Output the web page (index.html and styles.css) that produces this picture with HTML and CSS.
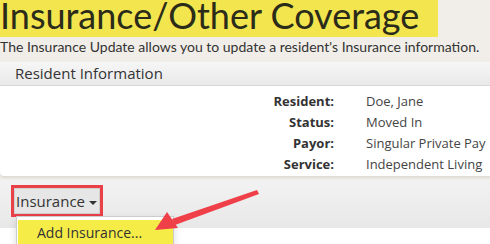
FILE: index.html
```html
<!DOCTYPE html>
<html lang="en">

<head>
    <meta charset="UTF-8">
    <meta name="viewport" content="width=device-width, initial-scale=1.0">
    <link rel="stylesheet" href="styles.css">
    <title>Insurance/Other Coverage</title>
</head>

<body>
    <header class="page-header">
        <h1 class="page-title">Insurance/Other Coverage</h1>
        <p class="page-intro">The Insurance Update allows you to update a resident's Insurance information.</p>
    </header>

    <section class="panel">
        <div class="panel-heading">Resident Information</div>
        <div class="panel-body">
            <dl class="info-list">
                <dt>Resident:</dt>
                <dd>Doe, Jane</dd>
                <dt>Status:</dt>
                <dd>Moved In</dd>
                <dt>Payor:</dt>
                <dd>Singular Private Pay</dd>
                <dt>Service:</dt>
                <dd>Independent Living</dd>
            </dl>
        </div>
    </section>

    <section class="toolbar">
        <div class="dropdown">
            <button class="dropdown-toggle">Insurance <span class="caret"></span></button>
            <ul class="dropdown-menu">
                <li class="active">Add Insurance...</li>
            </ul>
        </div>
    </section>
    <div class="content"></div>

    <!-- callout arrow -->
    <svg class="callout" width="120" height="50" viewBox="0 0 120 50">
        <path d="M109 8 L107 4 L22 33 L25 39 Z" fill="#ef4049" />
        <path d="M5 44 L17 26 L28 42 Z" fill="#ef4049" />
    </svg>
</body>

</html>
```
FILE: styles.css
```css
body {
    margin: 0;
    background: #f1eee9;
    color: #333;
    font-family: "Open Sans", sans-serif;
    position: relative;
    height: 244px;
    overflow: hidden;
}

.page-header {
    height: 62px;
}

.page-title {
    display: inline-block;
    margin: 0;
    padding: 0 19px 0 0;
    height: 37px;
    background: #f2e54e;
    font-family: Lato, sans-serif;
    font-weight: normal;
    font-size: 36px;
    line-height: 30px;
    color: #2b2b1a;
}

.page-intro {
    margin: 0;
    font-family: Lato, sans-serif;
    font-size: 14px;
    line-height: 20px;
    color: #333;
}

.panel {
    background: #fff;
    border-bottom-left-radius: 4px;
    box-shadow: 0 2px 2px rgba(0, 0, 0, 0.08);
}

.panel-heading {
    height: 23px;
    padding: 0 15px;
    background: linear-gradient(#f6f6f6, #e9e9e9);
    border-bottom: 1px solid #d8d8d8;
    font-size: 15px;
    line-height: 22px;
    color: #333;
}

.panel-body {
    height: 85px;
    padding-top: 5px;
}

.info-list {
    display: grid;
    grid-template-columns: 334px auto;
    column-gap: 32px;
    margin: 0;
    font-size: 13px;
    line-height: 21px;
}

.info-list dt {
    text-align: right;
    font-weight: bold;
    color: #333;
}

.info-list dd {
    margin: 0;
    color: #444;
    white-space: nowrap;
}

.toolbar {
    margin-top: 4px;
    height: 48px;
    background: linear-gradient(#f2f2f2, #e8e8e8);
    padding: 5px 0 0 11px;
    box-sizing: border-box;
}

.dropdown {
    position: relative;
    display: inline-block;
}

.dropdown-toggle {
    height: 32px;
    padding: 0 3px 0 2px;
    border: 3px solid #ea4048;
    background: #e6e6e6;
    box-shadow: inset 0 0 0 1px #d0d0d0;
    font-family: "Open Sans", sans-serif;
    font-size: 15px;
    color: #333;
}

.caret {
    display: inline-block;
    margin-left: 0;
    vertical-align: middle;
    border-top: 4px solid #333;
    border-left: 4px solid transparent;
    border-right: 4px solid transparent;
}

.dropdown-menu {
    position: absolute;
    left: 5px;
    top: 31px;
    width: 155px;
    margin: 0;
    padding: 3px 0 0 1px;
    list-style: none;
    background: #fff;
    border: 1px solid #ccc;
    box-shadow: 0 4px 8px rgba(0, 0, 0, 0.15);
}

.dropdown-menu li {
    padding: 0 0 0 19px;
    height: 26px;
    font-size: 14px;
    line-height: 26px;
    color: #333;
}

.dropdown-menu li.active {
    background: #f5ec48;
}

.content {
    height: 20px;
    background: #fff;
}

.callout {
    position: absolute;
    left: 150px;
    top: 186px;
}
```
